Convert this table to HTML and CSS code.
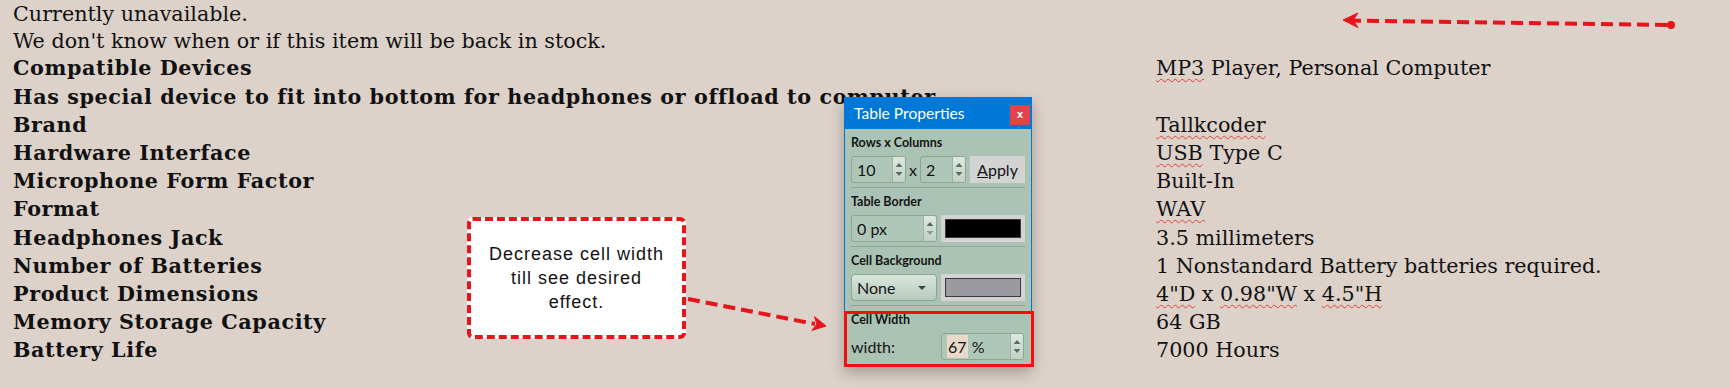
FILE: index.html
```html
<!DOCTYPE html>
<html lang="en">
<head>
<meta charset="utf-8">
<title>Table Properties</title>
<link rel="stylesheet" href="styles.css">
</head>
<body>
<div class="page">
  <div class="intro">
    <div>Currently unavailable.</div>
    <div>We don't know when or if this item will be back in stock.</div>
  </div>
  <div class="specs">
    <div class="k">Compatible Devices</div><div class="v"><span class="sp">MP3</span> Player, Personal Computer</div>
    <div class="k">Has special device to fit into bottom for headphones or offload to computer</div><div class="v"></div>
    <div class="k">Brand</div><div class="v"><span class="sp">Tallkcoder</span></div>
    <div class="k">Hardware Interface</div><div class="v"><span class="sp">USB</span> Type C</div>
    <div class="k">Microphone Form Factor</div><div class="v">Built-In</div>
    <div class="k">Format</div><div class="v"><span class="sp">WAV</span></div>
    <div class="k">Headphones Jack</div><div class="v">3.5 millimeters</div>
    <div class="k">Number of Batteries</div><div class="v">1 Nonstandard Battery batteries required.</div>
    <div class="k">Product Dimensions</div><div class="v"><span class="sp">4"D</span> x <span class="sp">0.98"W</span> x <span class="sp">4.5"H</span></div>
    <div class="k">Memory Storage Capacity</div><div class="v">64 GB</div>
    <div class="k">Battery Life</div><div class="v">7000 Hours</div>
  </div>

  <div class="callout"><p>Decrease cell width<br>till see desired<br>effect.</p></div>

  <div class="dialog">
    <div class="titlebar">
      <span class="title">Table Properties</span>
      <span class="close">x</span>
    </div>
    <div class="sec">
      <div class="lbl">Rows x Columns</div>
      <div class="ctrls">
        <div class="inp w55"><span class="val">10</span><span class="spin"><svg width="12" height="25" viewBox="0 0 12 25"><path d="M2.5 10 L6 6 L9.5 10 Z" fill="#5d6a62"/><path d="M2.5 15 L6 19 L9.5 15 Z" fill="#5d6a62"/></svg></span></div>
        <span class="times">x</span>
        <div class="inp w46"><span class="val">2</span><span class="spin"><svg width="12" height="25" viewBox="0 0 12 25"><path d="M2.5 10 L6 6 L9.5 10 Z" fill="#5d6a62"/><path d="M2.5 15 L6 19 L9.5 15 Z" fill="#5d6a62"/></svg></span></div>
        <div class="btn"><u>A</u>pply</div>
      </div>
    </div>
    <div class="sep"></div>
    <div class="sec">
      <div class="lbl">Table Border</div>
      <div class="ctrls gap">
        <div class="inp w86"><span class="val">0 px</span><span class="spin"><svg width="12" height="25" viewBox="0 0 12 25"><path d="M2.5 10 L6 6 L9.5 10 Z" fill="#5d6a62"/><path d="M2.5 15 L6 19 L9.5 15 Z" fill="#8e9c93"/></svg></span></div>
        <div class="swatch"><span class="chip black"></span></div>
      </div>
    </div>
    <div class="sep"></div>
    <div class="sec">
      <div class="lbl">Cell Background</div>
      <div class="ctrls gap">
        <div class="select"><span class="val">None</span><svg class="caret" width="10" height="6" viewBox="0 0 10 6"><path d="M1 1 L9 1 L5 5 Z" fill="#3d4741"/></svg></div>
        <div class="swatch"><span class="chip grey"></span></div>
      </div>
    </div>
    <div class="sep"></div>
    <div class="sec last">
      <div class="lbl">Cell Width</div>
      <div class="ctrls">
        <span class="plain">width:</span>
        <div class="inp w83"><span class="val"><span class="hl">67</span> %</span><span class="spin"><svg width="12" height="25" viewBox="0 0 12 25"><path d="M2.5 10 L6 6 L9.5 10 Z" fill="#5d6a62"/><path d="M2.5 15 L6 19 L9.5 15 Z" fill="#5d6a62"/></svg></span></div>
      </div>
    </div>
  </div>

  <svg class="annot" width="1730" height="388" viewBox="0 0 1730 388">
    <line x1="1667" y1="25" x2="1352" y2="20.5" stroke="#e8141b" stroke-width="4" stroke-dasharray="12 6"/>
    <circle cx="1671" cy="25" r="4" fill="#e8141b"/>
    <path d="M1343 20 L1358 13 L1353 20.2 L1358 27.5 Z" fill="#e8141b" stroke="#e8141b" stroke-width="1" stroke-linejoin="round"/>
    <line x1="688" y1="299" x2="815" y2="324" stroke="#e8141b" stroke-width="4" stroke-dasharray="12 6"/>
    <path d="M826 326 L814.5 316.6 L816.9 324.2 L811.9 330.4 Z" fill="#e8141b" stroke="#e8141b" stroke-width="1" stroke-linejoin="round"/>
  </svg>
</div>
</body>
</html>
```

FILE: styles.css
```css
html, body {
  margin: 0;
  padding: 0;
  background: #dcd2c9;
}

.page {
  position: relative;
  width: 1730px;
  height: 388px;
  overflow: hidden;
  padding-left: 13px;
  box-sizing: border-box;
  font-family: "DejaVu Serif", "Liberation Serif", serif;
  font-size: 20.7px;
  color: #111;
}

.intro {
  line-height: 26.7px;
  padding-top: 1px;
}

.specs {
  display: grid;
  grid-template-columns: 1143px auto;
  line-height: 28.2px;
}

.specs .k {
  font-weight: bold;
  letter-spacing: 0.6px;
  white-space: nowrap;
}

.specs .v {
  white-space: nowrap;
}

.sp {
  text-decoration: underline wavy #e0403a;
  text-decoration-thickness: 1px;
  text-underline-offset: 3px;
  text-decoration-skip-ink: none;
}

/* callout */
.callout {
  position: absolute;
  left: 467px;
  top: 217px;
  width: 219px;
  height: 122px;
  box-sizing: border-box;
  background: #fff;
  border: 4px dashed #e8141b;
  border-radius: 6px;
  display: flex;
  align-items: center;
  justify-content: center;
  font-family: "Liberation Sans", Arial, sans-serif;
  font-size: 18px;
  letter-spacing: 1px;
  color: #111;
  text-align: center;
}

.callout p {
  margin: 0;
  line-height: 24px;
}

/* dialog */
.dialog {
  position: absolute;
  left: 844px;
  top: 97px;
  width: 188px;
  height: 269px;
  box-sizing: border-box;
  border: 1px solid #0078d7;
  background: #abc3b5;
  box-shadow: 0 6px 14px rgba(0, 0, 0, 0.28);
  font-family: Lato, "Noto Sans", sans-serif;
  color: #141414;
}

.titlebar {
  height: 31px;
  background: #0078d7;
  display: flex;
  justify-content: space-between;
  align-items: flex-start;
  padding-left: 9px;
  padding-right: 1px;
}

.title {
  color: #fff;
  font-size: 15.6px;
  line-height: 31px;
}

.close {
  margin-top: 7px;
  width: 20px;
  height: 20px;
  background: #e0444a;
  color: #fff;
  font-family: "Liberation Sans", Arial, sans-serif;
  font-weight: bold;
  font-size: 11px;
  line-height: 18px;
  text-align: center;
}

.sec {
  padding: 6px 6px 4px;
}

.sec.last {
  position: relative;
  padding-bottom: 5px;
}

.sec.last::after {
  content: "";
  position: absolute;
  left: -1px;
  top: 5px;
  width: 190px;
  height: 56px;
  box-sizing: border-box;
  border: 3px solid #f40f0f;
}

.lbl {
  height: 16px;
  line-height: 16px;
  font-size: 12.5px;
  font-weight: 700;
  margin-bottom: 5px;
}

.ctrls {
  display: flex;
  height: 27px;
  font-size: 16px;
}

.ctrls.gap {
  gap: 4px;
}

.sep {
  margin: 0 6px;
  height: 0;
  border-top: 1px solid #8ea595;
}

.inp {
  box-sizing: border-box;
  height: 27px;
  border: 1px solid #8ea595;
  border-radius: 3px;
  background: #afc7b9;
  display: flex;
  align-items: stretch;
  overflow: hidden;
}

.inp .val {
  flex: 1;
  padding-left: 5px;
  line-height: 25px;
}

.spin {
  width: 12px;
  border-left: 1px solid #9db2a4;
  background: linear-gradient(#dde8e0, #c1d2c6);
  display: flex;
}

.w55 { width: 55px; }
.w46 { width: 46px; }
.w86 { width: 86px; }
.w83 { width: 83px; margin-right: 1px; }

.times {
  width: 14px;
  text-align: center;
  line-height: 27px;
}

.btn {
  width: 55px;
  margin-left: 4px;
  background: #d3d3d3;
  text-align: center;
  line-height: 27px;
}

.swatch {
  flex: 1;
  background: #d3d3d3;
  padding: 4px 4px;
  display: flex;
}

.chip {
  flex: 1;
  box-sizing: border-box;
  border: 1px solid #3a3a3a;
}

.chip.black { background: #000; }
.chip.grey { background: #9b9aa0; }

.select {
  width: 86px;
  box-sizing: border-box;
  border: 1px solid #8ea595;
  border-radius: 4px;
  background: linear-gradient(#d8e6dc, #b7cbbd);
  display: flex;
  align-items: center;
  justify-content: space-between;
  padding: 0 9px 0 5px;
}

.select .val {
  line-height: 25px;
}

.plain {
  flex: 1;
  line-height: 27px;
}

.hl {
  background: #ead9ca;
  padding: 0 1px;
  display: inline-block;
  line-height: 23px;
}

.annot {
  position: absolute;
  left: 0;
  top: 0;
  pointer-events: none;
}
```
